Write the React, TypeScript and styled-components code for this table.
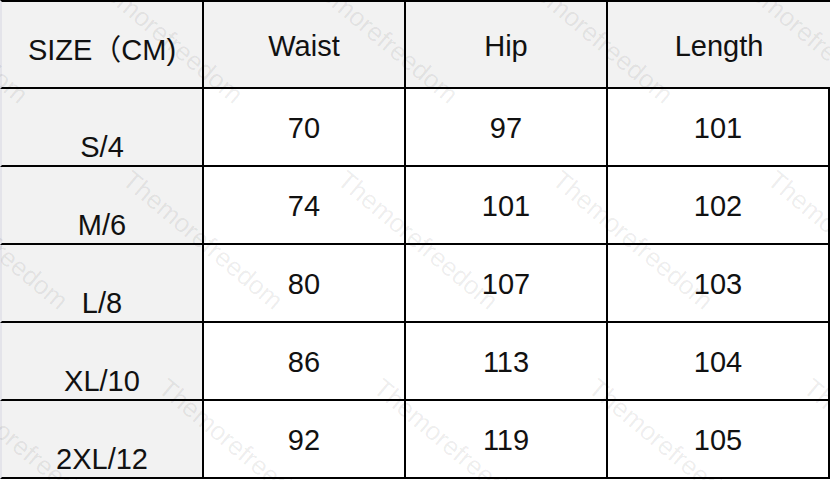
import React from "react";
import styled, { createGlobalStyle } from "styled-components";

const GlobalStyle = createGlobalStyle`
  html, body { margin: 0; padding: 0; background: #ffffff; }
  body {
    width: 830px;
    height: 480px;
    overflow: hidden;
    font-family: "Liberation Sans", Arial, "Noto Sans CJK SC", sans-serif;
  }
`;

const Page = styled.div`
  position: relative;
  width: 830px;
  height: 480px;
  overflow: hidden;
  background: #ffffff;
`;

const Table = styled.div`
  display: grid;
  grid-template-columns: 204px 202px 202px 1fr;
  grid-template-rows: 89px repeat(5, 78px);
  width: 830px;
`;

const HeadCell = styled.div<{ $first?: boolean; $last?: boolean }>`
  display: flex;
  align-items: center;
  justify-content: center;
  padding-top: 4px;
  box-sizing: border-box;
  background: #f2f2f2;
  border-top: 2px solid #000;
  border-bottom: 2px solid #000;
  border-right: ${(p) => (p.$last ? "none" : "2px solid #000")};
  border-left: ${(p) => (p.$first ? "2px solid #e4e4ea" : "none")};
  font-size: 29px;
  color: #111;
  white-space: nowrap;
`;

const LabelCell = styled.div`
  display: flex;
  align-items: flex-end;
  justify-content: center;
  padding-bottom: 1px;
  box-sizing: border-box;
  background: #f2f2f2;
  border-left: 2px solid #e4e4ea;
  border-right: 2px solid #000;
  border-bottom: 2px solid #000;
  font-size: 29px;
  color: #111;
`;

const ValueCell = styled.div`
  display: flex;
  align-items: center;
  justify-content: center;
  padding-top: 2px;
  box-sizing: border-box;
  background: #ffffff;
  border-right: 2px solid #000;
  border-bottom: 2px solid #000;
  font-size: 29px;
  color: #111;
`;

const Overlay = styled.div`
  position: absolute;
  inset: 0;
  pointer-events: none;
  overflow: hidden;
`;

const Mark = styled.span`
  position: absolute;
  transform-origin: 0 0;
  transform: rotate(40deg);
  font-family: "Liberation Sans", Arial, sans-serif;
  font-size: 26px;
  color: rgba(0, 0, 0, 0.075);
  white-space: nowrap;
  line-height: 1;
`;

const rows = [
  { size: "S/4", waist: 70, hip: 97, length: 101 },
  { size: "M/6", waist: 74, hip: 101, length: 102 },
  { size: "L/8", waist: 80, hip: 107, length: 103 },
  { size: "XL/10", waist: 86, hip: 113, length: 104 },
  { size: "2XL/12", waist: 92, hip: 119, length: 105 },
];

const markRows = [
  { y: -40, x0: -120 },
  { y: 166, x0: -80 },
  { y: 374, x0: -44 },
];

export default function App() {
  const marks: { x: number; y: number }[] = [];
  markRows.forEach((r) => {
    for (let k = 0; k < 5; k++) marks.push({ x: r.x0 + k * 215, y: r.y });
  });
  return (
    <Page>
      <GlobalStyle />
      <Table>
        <HeadCell $first>SIZE（CM)</HeadCell>
        <HeadCell>Waist</HeadCell>
        <HeadCell>Hip</HeadCell>
        <HeadCell $last>Length</HeadCell>
        {rows.map((r) => (
          <React.Fragment key={r.size}>
            <LabelCell>{r.size}</LabelCell>
            <ValueCell>{r.waist}</ValueCell>
            <ValueCell>{r.hip}</ValueCell>
            <ValueCell>{r.length}</ValueCell>
          </React.Fragment>
        ))}
      </Table>
      <Overlay>
        {marks.map((m, i) => (
          <Mark key={i} style={{ left: m.x, top: m.y }}>
            Themorefreedom
          </Mark>
        ))}
      </Overlay>
    </Page>
  );
}
